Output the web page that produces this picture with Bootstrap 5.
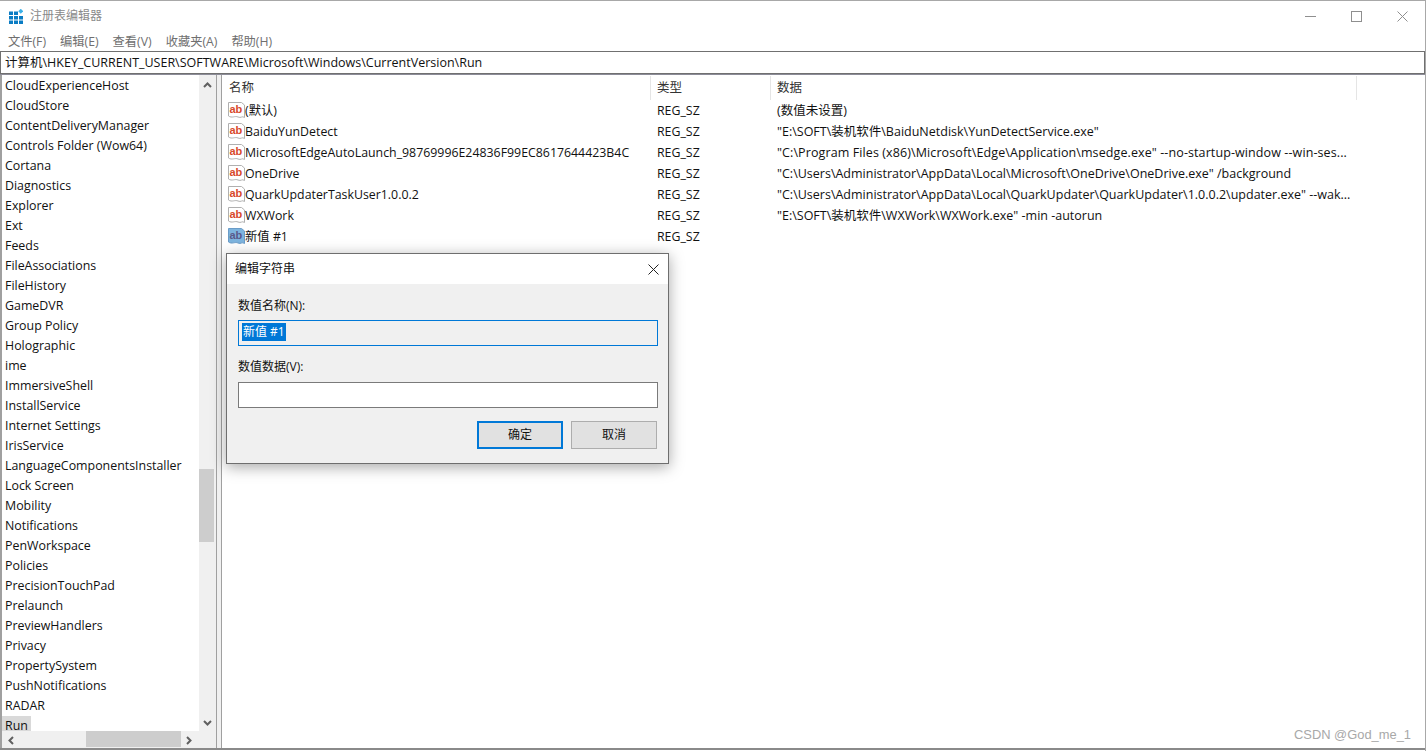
<!doctype html>
<html lang="zh-CN">
<head>
<meta charset="utf-8">
<title>注册表编辑器</title>
<link href="https://cdn.jsdelivr.net/npm/bootstrap@5.3.0/dist/css/bootstrap.min.css" rel="stylesheet">
<style>
html,body{height:100%;margin:0;overflow:hidden}
body{font-family:"Open Sans","Noto Sans CJK SC",sans-serif;font-size:12.35px;line-height:20px;color:#111;background:#fff}
.app{width:1426px;height:751px;border-top:1px solid #a8a8a8;border-right:1px solid #a8a8a8;position:relative}
.titlebar{height:30px;padding-left:9px;color:#8a8a8a;font-size:12px}
.titlebar svg.logo{margin-right:7px}
.winbtns{margin-left:auto}
.winbtn{width:46px;height:29px}
.menubar{height:20px;padding-top:1px;padding-left:8px;gap:14px;color:#6f6f6f;font-size:12.25px}
.addr{height:23px;border:1.5px solid #707070;padding-left:4px;padding-top:1px;line-height:20px;font-size:12.5px;background:#fff;white-space:nowrap}
.panes{height:676px;border-top:1px solid #8c8c98;border-bottom:2px solid #8a8a8a;background:#f0f0f0}
.tree{width:217px;border-left:2px solid #a0a0a0;border-right:1px solid #a0a0a0;background:#fff;position:relative;flex:none;overflow:hidden}
.treeview{width:197px;height:658px;overflow:hidden;padding-left:3px;padding-top:1px;font-size:12.4px}
.node{height:20px;line-height:20px;white-space:nowrap;width:max-content;padding-right:3px}
.node-on{background:#d9d9d9;margin-left:-3px;padding-left:3px}
.vbar{width:17px;height:658px;background:#f0f0f0;position:relative}
.vthumb{background:#cdcdcd;width:15px;height:73px;margin:394px 0 0 0}
.arrow{position:absolute;left:4px}
.hbar{height:17px;background:#f0f0f0;position:absolute;left:0;right:0;bottom:0}
.hthumb{position:absolute;left:84px;width:95px;top:0;height:16px;background:#cdcdcd}
.listpane{flex:1;margin-left:4px;border-left:1px solid #a0a0a0;background:#fff;overflow:hidden;padding-top:1px}
.lhead{height:24px;color:#333;line-height:24px;font-size:12.5px}
.lhead>div{border-right:1px solid #e5e5e5;padding-left:6px;height:24px}
.lhead>div.c1{padding-left:7px}
.c1{width:429px;flex:none}
.c2{width:120px;flex:none}
.c3{width:586px;flex:none}
.lrow{height:21px;line-height:21px;white-space:nowrap}
.lrow .c1{padding-left:6px;display:flex;align-items:center}
.lrow .c2{padding-left:6px}
.lrow .c3{padding-left:6px;width:582px;font-size:12.5px}
.lrow .c3.c3-wide{letter-spacing:.1px}
.lrow svg{flex:none}
.dlg{position:absolute;left:226px;top:252px;width:443px;height:211px;border:1px solid #6e6e6e;background:#f0f0f0;box-shadow:0 3px 14px rgba(0,0,0,.35)}
.dlghead{height:30px;background:#fff;padding-left:8px;font-size:12px}
.dlghead svg{margin-left:auto;margin-right:9px}
.dlgbody{padding:12px 10px 0 11px;font-size:12px}
.dlglabel{margin:0;line-height:20px;height:24px;display:block;color:#111}
.dlglabel-b{height:25px}
.fld{border-radius:0;height:26px;padding:0 3px;font-size:12px;color:#111;line-height:20px;box-shadow:none!important;font-family:inherit}
.fld1{border:1px solid #0078d7;background:#f0f0f0;margin-bottom:11px;display:flex;align-items:center}
.fld2{border:1px solid #7a7a7a;background:#fff;margin-bottom:13px}
.sel{background:#0078d7;color:#fff;display:inline-block;height:18px;line-height:18px;padding:0 1px;width:44px;margin-bottom:2px}
.btnrow{margin-right:1px}
.dbtn{width:86px;height:28px;border-radius:0;background:#e1e1e1;font-size:12px;padding:0;color:#111;line-height:20px}
.dbtn-ok{border:2px solid #0078d7}
.dbtn-no{border:1px solid #adadad;margin-left:8px}
.wmark{position:absolute;right:14px;bottom:8px;font-family:"Liberation Sans",sans-serif;font-size:12.9px;line-height:16px;color:#a8a8a8}
</style>
</head>
<body>
<div class="app">
  <div class="titlebar d-flex align-items-center">
    <svg class="logo" width="14" height="15" viewBox="0 0 14 15"><g fill="#0a7cc4"><rect x="0" y="2.500" width="4" height="3.500"/><rect x="5" y="2.500" width="4" height="3.500"/><rect x="0" y="7" width="4" height="3.500"/><rect x="5" y="7" width="4" height="3.500"/><rect x="10" y="7" width="4" height="3.500"/><rect x="0" y="11.500" width="4" height="3.500"/><rect x="5" y="11.500" width="4" height="3.500"/><rect x="10" y="11.500" width="4" height="3.500"/></g><rect x="10" y="0.500" width="3.500" height="3.500" fill="#3bb0e8" transform="rotate(45 11.750 2.250)"/></svg>
    <span>注册表编辑器</span>
    <div class="winbtns d-flex">
      <div class="winbtn d-flex align-items-center justify-content-center"><svg width="11" height="11" viewBox="0 0 11 11"><path d="M0 5.500H11" stroke="#8f8f8f" fill="none"/></svg></div>
      <div class="winbtn d-flex align-items-center justify-content-center"><svg width="11" height="11" viewBox="0 0 11 11"><rect x=".5" y=".5" width="10" height="10" stroke="#8f8f8f" fill="none"/></svg></div>
      <div class="winbtn d-flex align-items-center justify-content-center"><svg width="11" height="11" viewBox="0 0 11 11"><path d="M.5 .5L10.500 10.500M10.500 .5L.5 10.500" stroke="#8f8f8f" fill="none"/></svg></div>
    </div>
  </div>
  <div class="menubar d-flex align-items-center">
    <span>文件(F)</span><span>编辑(E)</span><span>查看(V)</span><span>收藏夹(A)</span><span>帮助(H)</span>
  </div>
  <div class="addr">计算机\HKEY_CURRENT_USER\SOFTWARE\Microsoft\Windows\CurrentVersion\Run</div>
  <div class="panes d-flex">
    <div class="tree">
      <div class="d-flex">
        <div class="treeview">
          <div class="node">CloudExperienceHost</div>
          <div class="node">CloudStore</div>
          <div class="node">ContentDeliveryManager</div>
          <div class="node">Controls Folder (Wow64)</div>
          <div class="node">Cortana</div>
          <div class="node">Diagnostics</div>
          <div class="node">Explorer</div>
          <div class="node">Ext</div>
          <div class="node">Feeds</div>
          <div class="node">FileAssociations</div>
          <div class="node">FileHistory</div>
          <div class="node">GameDVR</div>
          <div class="node">Group Policy</div>
          <div class="node">Holographic</div>
          <div class="node">ime</div>
          <div class="node">ImmersiveShell</div>
          <div class="node">InstallService</div>
          <div class="node">Internet Settings</div>
          <div class="node">IrisService</div>
          <div class="node">LanguageComponentsInstaller</div>
          <div class="node">Lock Screen</div>
          <div class="node">Mobility</div>
          <div class="node">Notifications</div>
          <div class="node">PenWorkspace</div>
          <div class="node">Policies</div>
          <div class="node">PrecisionTouchPad</div>
          <div class="node">Prelaunch</div>
          <div class="node">PreviewHandlers</div>
          <div class="node">Privacy</div>
          <div class="node">PropertySystem</div>
          <div class="node">PushNotifications</div>
          <div class="node">RADAR</div>
          <div class="node node-on">Run</div>
        </div>
        <div class="vbar">
          <div class="vthumb"></div>
          <svg class="arrow" style="top:7px" width="9" height="6" viewBox="0 0 9 6"><path d="M1 5L4.500 1.500L8 5" stroke="#606060" stroke-width="2" fill="none"/></svg>
          <svg class="arrow" style="bottom:7px" width="9" height="6" viewBox="0 0 9 6"><path d="M1 1L4.500 4.500L8 1" stroke="#606060" stroke-width="2" fill="none"/></svg>
        </div>
      </div>
      <div class="hbar">
        <div class="hthumb"></div>
        <svg class="arrow" style="left:6px;top:5px" width="6" height="9" viewBox="0 0 6 9"><path d="M5 1L1.500 4.500L5 8" stroke="#606060" stroke-width="2" fill="none"/></svg>
        <svg class="arrow" style="left:184px;top:5px" width="6" height="9" viewBox="0 0 6 9"><path d="M1 1L4.500 4.500L1 8" stroke="#606060" stroke-width="2" fill="none"/></svg>
      </div>
    </div>
    <div class="listpane">
      <div class="lhead d-flex">
        <div class="c1">名称</div><div class="c2">类型</div><div class="c3">数据</div>
      </div>
      <div class="lrow d-flex"><div class="c1"><svg width="17" height="17" viewBox="0 0 17 17"><path d="M.5 .5H13.500L16.500 3V15.500C14 13.500 13 16.500 10 15C7 13.500 4 16.500 .5 14Z" fill="#fff" stroke="#b0b0b0"/><text x="1.500" y="11" font-family="Liberation Sans" font-weight="700" font-size="11" fill="#d8492b">ab</text></svg><span>(默认)</span></div><div class="c2">REG_SZ</div><div class="c3">(数值未设置)</div></div>
      <div class="lrow d-flex"><div class="c1"><svg width="17" height="17" viewBox="0 0 17 17"><path d="M.5 .5H13.500L16.500 3V15.500C14 13.500 13 16.500 10 15C7 13.500 4 16.500 .5 14Z" fill="#fff" stroke="#b0b0b0"/><text x="1.500" y="11" font-family="Liberation Sans" font-weight="700" font-size="11" fill="#d8492b">ab</text></svg><span>BaiduYunDetect</span></div><div class="c2">REG_SZ</div><div class="c3">"E:\SOFT\装机软件\BaiduNetdisk\YunDetectService.exe"</div></div>
      <div class="lrow d-flex"><div class="c1"><svg width="17" height="17" viewBox="0 0 17 17"><path d="M.5 .5H13.500L16.500 3V15.500C14 13.500 13 16.500 10 15C7 13.500 4 16.500 .5 14Z" fill="#fff" stroke="#b0b0b0"/><text x="1.500" y="11" font-family="Liberation Sans" font-weight="700" font-size="11" fill="#d8492b">ab</text></svg><span>MicrosoftEdgeAutoLaunch_98769996E24836F99EC8617644423B4C</span></div><div class="c2">REG_SZ</div><div class="c3 c3-wide">"C:\Program Files (x86)\Microsoft\Edge\Application\msedge.exe" --no-startup-window --win-ses...</div></div>
      <div class="lrow d-flex"><div class="c1"><svg width="17" height="17" viewBox="0 0 17 17"><path d="M.5 .5H13.500L16.500 3V15.500C14 13.500 13 16.500 10 15C7 13.500 4 16.500 .5 14Z" fill="#fff" stroke="#b0b0b0"/><text x="1.500" y="11" font-family="Liberation Sans" font-weight="700" font-size="11" fill="#d8492b">ab</text></svg><span>OneDrive</span></div><div class="c2">REG_SZ</div><div class="c3">"C:\Users\Administrator\AppData\Local\Microsoft\OneDrive\OneDrive.exe" /background</div></div>
      <div class="lrow d-flex"><div class="c1"><svg width="17" height="17" viewBox="0 0 17 17"><path d="M.5 .5H13.500L16.500 3V15.500C14 13.500 13 16.500 10 15C7 13.500 4 16.500 .5 14Z" fill="#fff" stroke="#b0b0b0"/><text x="1.500" y="11" font-family="Liberation Sans" font-weight="700" font-size="11" fill="#d8492b">ab</text></svg><span>QuarkUpdaterTaskUser1.0.0.2</span></div><div class="c2">REG_SZ</div><div class="c3">"C:\Users\Administrator\AppData\Local\QuarkUpdater\QuarkUpdater\1.0.0.2\updater.exe" --wak...</div></div>
      <div class="lrow d-flex"><div class="c1"><svg width="17" height="17" viewBox="0 0 17 17"><path d="M.5 .5H13.500L16.500 3V15.500C14 13.500 13 16.500 10 15C7 13.500 4 16.500 .5 14Z" fill="#fff" stroke="#b0b0b0"/><text x="1.500" y="11" font-family="Liberation Sans" font-weight="700" font-size="11" fill="#d8492b">ab</text></svg><span>WXWork</span></div><div class="c2">REG_SZ</div><div class="c3">"E:\SOFT\装机软件\WXWork\WXWork.exe" -min -autorun</div></div>
      <div class="lrow d-flex"><div class="c1"><svg width="17" height="17" viewBox="0 0 17 17"><path d="M.5 .5H13.500L16.500 3V15.500C14 13.500 13 16.500 10 15C7 13.500 4 16.500 .5 14Z" fill="#7db4de" stroke="#6a9cc8"/><text x="1.500" y="11" font-family="Liberation Sans" font-weight="700" font-size="11" fill="#5a5a8a">ab</text></svg><span>新值 #1</span></div><div class="c2">REG_SZ</div><div class="c3"></div></div>
    </div>
  </div>

  <div class="dlg">
    <div class="dlghead d-flex align-items-center">
      <span>编辑字符串</span>
      <svg width="11" height="11" viewBox="0 0 11 11"><path d="M.5 .5L10.500 10.500M10.500 .5L.5 10.500" stroke="#222" fill="none"/></svg>
    </div>
    <div class="dlgbody">
      <label class="dlglabel">数值名称(N):</label>
      <div class="fld fld1"><span class="sel">新值 #1</span></div>
      <label class="dlglabel dlglabel-b">数值数据(V):</label>
      <input class="form-control fld fld2" type="text" aria-label="数值数据">
      <div class="btnrow d-flex justify-content-end">
        <button class="btn dbtn dbtn-ok" type="button">确定</button>
        <button class="btn dbtn dbtn-no" type="button">取消</button>
      </div>
    </div>
  </div>
  <div class="wmark">CSDN @God_me_1</div>
</div>
<script src="https://cdn.jsdelivr.net/npm/bootstrap@5.3.0/dist/js/bootstrap.bundle.min.js"></script>
</body>
</html>
